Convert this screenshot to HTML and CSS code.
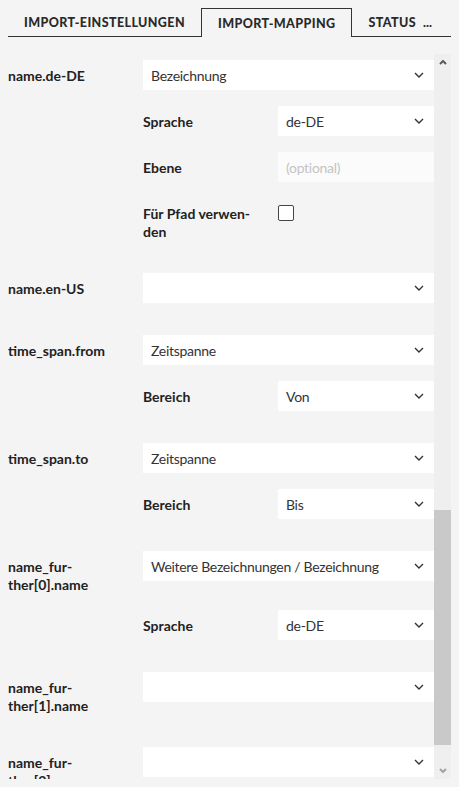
FILE: index.html
```html
<!DOCTYPE html>
<html lang="de">
<head>
    <meta charset="UTF-8">
    <meta name="viewport" content="width=device-width, initial-scale=1.0">
    <title>Import-Mapping</title>
    <link rel="stylesheet" href="styles.css">
</head>
<body>

<div class="tabs">
    <div class="tab">IMPORT-EINSTELLUNGEN</div>
    <div class="tab active">IMPORT-MAPPING</div>
    <div class="tab last">STATUS</div>
    <div class="tab more">...</div>
    <div class="tab-fill"></div>
</div>

<div class="panel">
    <div class="mapping">

        <div class="group">
            <div class="line">
                <div class="label">name.de-DE</div>
                <div class="select"><span>Bezeichnung</span><svg viewBox="0 0 10 6"><path d="M1 1 L5 5 L9 1"/></svg></div>
            </div>
            <div class="line sub">
                <div class="label">Sprache</div>
                <div class="select"><span>de-DE</span><svg viewBox="0 0 10 6"><path d="M1 1 L5 5 L9 1"/></svg></div>
            </div>
            <div class="line sub">
                <div class="label">Ebene</div>
                <div class="input">(optional)</div>
            </div>
            <div class="line sub">
                <div class="label">Für Pfad verwen&shy;den</div>
                <div class="check-cell"><div class="checkbox"></div></div>
            </div>
        </div>

        <div class="group">
            <div class="line">
                <div class="label">name.en-US</div>
                <div class="select"><span></span><svg viewBox="0 0 10 6"><path d="M1 1 L5 5 L9 1"/></svg></div>
            </div>
        </div>

        <div class="group">
            <div class="line">
                <div class="label">time_span.from</div>
                <div class="select"><span>Zeitspanne</span><svg viewBox="0 0 10 6"><path d="M1 1 L5 5 L9 1"/></svg></div>
            </div>
            <div class="line sub">
                <div class="label">Bereich</div>
                <div class="select"><span>Von</span><svg viewBox="0 0 10 6"><path d="M1 1 L5 5 L9 1"/></svg></div>
            </div>
        </div>

        <div class="group">
            <div class="line">
                <div class="label">time_span.to</div>
                <div class="select"><span>Zeitspanne</span><svg viewBox="0 0 10 6"><path d="M1 1 L5 5 L9 1"/></svg></div>
            </div>
            <div class="line sub">
                <div class="label">Bereich</div>
                <div class="select"><span>Bis</span><svg viewBox="0 0 10 6"><path d="M1 1 L5 5 L9 1"/></svg></div>
            </div>
        </div>

        <div class="group">
            <div class="line">
                <div class="label">name_fur&shy;ther[0].name</div>
                <div class="select"><span>Weitere Bezeichnungen / Bezeichnung</span><svg viewBox="0 0 10 6"><path d="M1 1 L5 5 L9 1"/></svg></div>
            </div>
            <div class="line sub">
                <div class="label">Sprache</div>
                <div class="select"><span>de-DE</span><svg viewBox="0 0 10 6"><path d="M1 1 L5 5 L9 1"/></svg></div>
            </div>
        </div>

        <div class="group">
            <div class="line">
                <div class="label">name_fur&shy;ther[1].name</div>
                <div class="select"><span></span><svg viewBox="0 0 10 6"><path d="M1 1 L5 5 L9 1"/></svg></div>
            </div>
        </div>

        <div class="group">
            <div class="line">
                <div class="label">name_fur&shy;ther[2].name</div>
                <div class="select"><span></span><svg viewBox="0 0 10 6"><path d="M1 1 L5 5 L9 1"/></svg></div>
            </div>
        </div>

    </div>

    <div class="scrollbar">
        <div class="arrow up"><svg viewBox="0 0 8 5"><path d="M1 4 L4 1 L7 4"/></svg></div>
        <div class="track"><div class="thumb"></div></div>
        <div class="arrow down"><svg viewBox="0 0 8 5"><path d="M1 1 L4 4 L7 1"/></svg></div>
    </div>
</div>

</body>
</html>
```

FILE: styles.css
```css
body {
    margin: 8px;
    background-color: #f4f4f4;
    font-family: Lato, "Liberation Sans", sans-serif;
    font-size: 14px;
    color: #222;
}
.tabs {
    display: flex;
    height: 29px;
}
.tab {
    display: flex;
    flex-shrink: 0;
    align-items: center;
    padding: 1px 16px 0;
    border-bottom: 1px solid #333;
    white-space: nowrap;
    font-size: 12.5px;
    font-weight: 900;
    letter-spacing: 0.4px;
    color: #2a2a2a;
}
.tab.active {
    border: 1px solid #333;
    border-bottom: none;
    padding-top: 0;
}
.tab.last {
    padding-right: 7px;
}
.tab.more {
    padding: 1px 0 0;
    letter-spacing: 0;
}
.tab-fill {
    flex: 1;
    border-bottom: 1px solid #333;
}
.panel {
    display: flex;
    height: 725px;
    margin-top: 17px;
}
.mapping {
    width: 426px;
    padding-top: 6px;
    overflow: hidden;
}
.group {
    margin-bottom: 32px;
}
.line {
    display: grid;
    grid-template-columns: 135px 1fr;
    align-items: start;
}
.line.sub {
    margin-left: 135px;
    margin-top: 16px;
}
.label {
    padding: 7px 18px 0 0;
    line-height: 18px;
    font-weight: bold;
    color: #222;
}
.select {
    display: flex;
    align-items: center;
    justify-content: space-between;
    height: 30px;
    padding: 0 10px 0 8px;
    background-color: #fff;
    color: #333;
    letter-spacing: -0.3px;
    white-space: nowrap;
}
.select svg {
    width: 10px;
    height: 6px;
    fill: none;
    stroke: #333;
    stroke-width: 1.4;
}
.input {
    display: flex;
    align-items: center;
    height: 30px;
    padding: 0 8px;
    background-color: #fbfbfb;
    color: #c4c4c4;
    letter-spacing: -0.3px;
}
.check-cell {
    padding-top: 7px;
}
.checkbox {
    width: 14px;
    height: 14px;
    border: 1px solid #444;
    border-radius: 2px;
    background-color: #fff;
}
.scrollbar {
    display: flex;
    flex-direction: column;
    width: 17px;
    background-color: #efefef;
}
.arrow {
    display: flex;
    align-items: center;
    justify-content: center;
    height: 17px;
}
.arrow svg {
    width: 8px;
    height: 5px;
    fill: none;
    stroke-width: 2;
}
.arrow.up svg {
    stroke: #5a5a5a;
}
.arrow.down svg {
    stroke: #a3a3a3;
}
.track {
    flex: 1;
    display: flex;
    flex-direction: column;
    justify-content: flex-end;
    padding-bottom: 17px;
}
.thumb {
    height: 235px;
    background-color: #c9c9c9;
}
```
